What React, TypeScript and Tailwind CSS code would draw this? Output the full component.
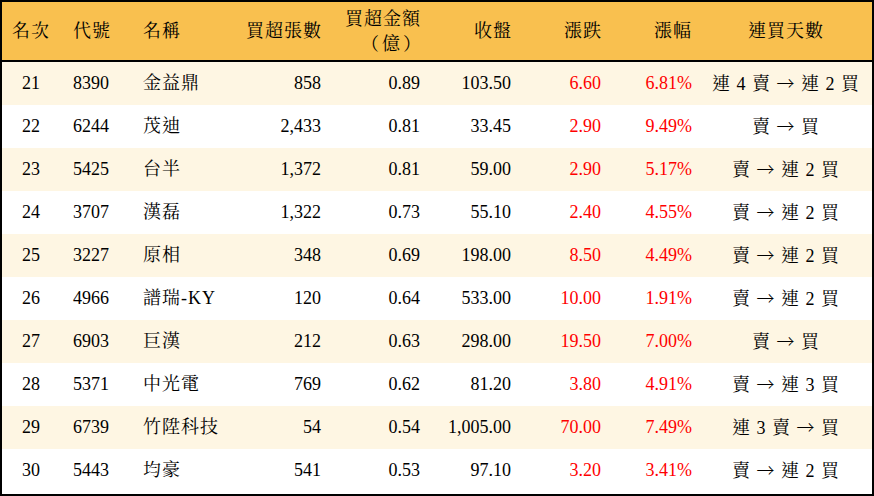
import React from "react";

type Row = {
  rank: string;
  code: string;
  name: string;
  qty: string;
  amt: string;
  close: string;
  chg: string;
  pct: string;
  days: [string, string];
};

const rows: Row[] = [
  { rank: "21", code: "8390", name: "金益鼎", qty: "858", amt: "0.89", close: "103.50", chg: "6.60", pct: "6.81%", days: ["連 4 賣", "連 2 買"] },
  { rank: "22", code: "6244", name: "茂迪", qty: "2,433", amt: "0.81", close: "33.45", chg: "2.90", pct: "9.49%", days: ["賣", "買"] },
  { rank: "23", code: "5425", name: "台半", qty: "1,372", amt: "0.81", close: "59.00", chg: "2.90", pct: "5.17%", days: ["賣", "連 2 買"] },
  { rank: "24", code: "3707", name: "漢磊", qty: "1,322", amt: "0.73", close: "55.10", chg: "2.40", pct: "4.55%", days: ["賣", "連 2 買"] },
  { rank: "25", code: "3227", name: "原相", qty: "348", amt: "0.69", close: "198.00", chg: "8.50", pct: "4.49%", days: ["賣", "連 2 買"] },
  { rank: "26", code: "4966", name: "譜瑞-KY", qty: "120", amt: "0.64", close: "533.00", chg: "10.00", pct: "1.91%", days: ["賣", "連 2 買"] },
  { rank: "27", code: "6903", name: "巨漢", qty: "212", amt: "0.63", close: "298.00", chg: "19.50", pct: "7.00%", days: ["賣", "買"] },
  { rank: "28", code: "5371", name: "中光電", qty: "769", amt: "0.62", close: "81.20", chg: "3.80", pct: "4.91%", days: ["賣", "連 3 買"] },
  { rank: "29", code: "6739", name: "竹陞科技", qty: "54", amt: "0.54", close: "1,005.00", chg: "70.00", pct: "7.49%", days: ["連 3 賣", "買"] },
  { rank: "30", code: "5443", name: "均豪", qty: "541", amt: "0.53", close: "97.10", chg: "3.20", pct: "3.41%", days: ["賣", "連 2 買"] },
];

const grid =
  "grid grid-cols-[58px_70px_100px_100px_100px_90px_90px_90px_172px] items-center";

const font = {
  fontFamily:
    '"Liberation Serif", "Noto Serif CJK TC", "Noto Sans CJK TC", serif',
};

export default function App() {
  return (
    <div
      className="w-[874px] h-[496px] bg-white border-2 border-black text-black text-[18px] leading-[23px]"
      style={font}
    >
      <div className={`${grid} h-[60px] bg-[#f9c04f] border-b-2 border-black`}>
        <div className="text-center tracking-[1px]">名次</div>
        <div className="pl-[13px] tracking-[1px]">代號</div>
        <div className="pl-[13px] tracking-[1px]">名稱</div>
        <div className="text-right pr-[8px] tracking-[1px]">買超張數</div>
        <div className="pr-[9px] tracking-[1px] flex flex-col items-end">
          <span>買超金額</span>
          <span className="font-['Noto_Serif_CJK_TC',serif] tracking-[3px] mr-[-3px]">（億）</span>
        </div>
        <div className="text-right pr-[8px] tracking-[1px]">收盤</div>
        <div className="text-right pr-[8px] tracking-[1px]">漲跌</div>
        <div className="text-right pr-[8px] tracking-[1px]">漲幅</div>
        <div className="text-center tracking-[1px]">連買天數</div>
      </div>
      {rows.map((r, i) => (
        <div
          key={r.rank}
          className={`${grid} h-[43px] ${i % 2 === 0 ? "bg-[#fef6e3]" : "bg-white"}`}
        >
          <div className="text-center">{r.rank}</div>
          <div className="pl-[13px]">{r.code}</div>
          <div className="pl-[13px] tracking-[1px] whitespace-nowrap">{r.name}</div>
          <div className="text-right pr-[9px]">{r.qty}</div>
          <div className="text-right pr-[10px]">{r.amt}</div>
          <div className="text-right pr-[9px]">{r.close}</div>
          <div className="text-right pr-[9px] text-[#ff0000]">{r.chg}</div>
          <div className="text-right pr-[8px] text-[#ff0000]">{r.pct}</div>
          <div className="text-center tracking-[1px] whitespace-nowrap">
            {r.days[0]}{" "}
            <span className="font-['Noto_Sans_CJK_TC',sans-serif] font-light">→</span>{" "}
            {r.days[1]}
          </div>
        </div>
      ))}
    </div>
  );
}
